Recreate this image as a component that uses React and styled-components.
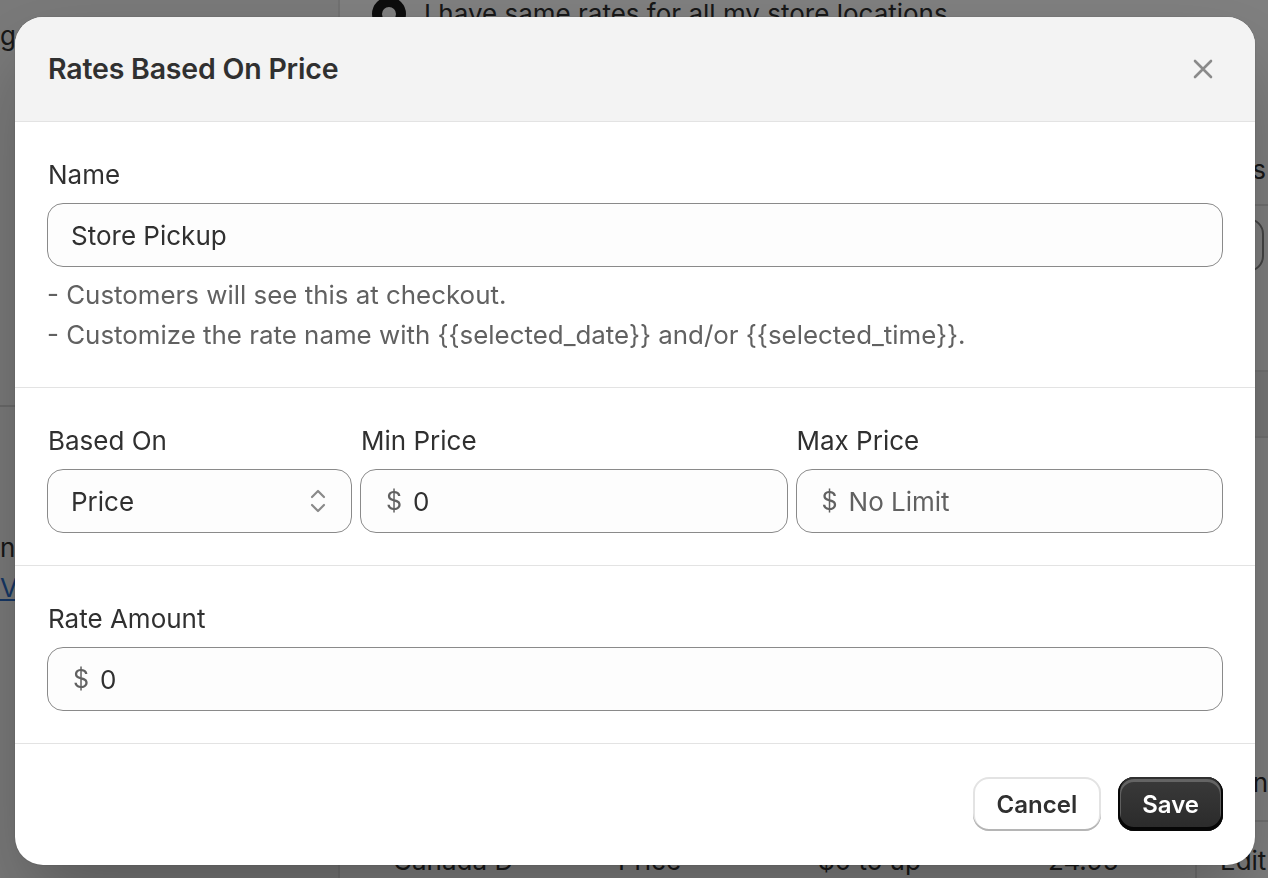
import React from "react";
import styled, { createGlobalStyle } from "styled-components";

const GlobalStyle = createGlobalStyle`
  * { box-sizing: border-box; }
  html, body { margin: 0; padding: 0; height: 100%; }
  body {
    font-family: Inter, "Noto Sans", "Liberation Sans", sans-serif;
    color: #303030;
    background: #ffffff;
    overflow: hidden;
  }
`;

/* ---------- background page ---------- */
const Page = styled.div`
  display: grid;
  grid-template-columns: 340px 1fr;
  height: 100vh;
  overflow: hidden;
  background: #ffffff;
`;

const Sidebar = styled.aside`
  background: #f3f3f3;
  border-right: 2px solid #e3e3e3;
  display: flex;
  flex-direction: column;
  font-size: 26px;
`;

const SideText = styled.div`
  padding: ${(p) => p.$pad || "18px 0 0 0"};
  line-height: 36px;
  color: #303030;
  white-space: nowrap;
`;

const SideRule = styled.div`
  height: 2px;
  background: #d4d4d4;
  margin-top: ${(p) => p.$top || "0"};
`;

const SideLink = styled.a`
  color: #2c6ecb;
  text-decoration: underline;
  padding-top: 4px;
  line-height: 36px;
  white-space: nowrap;
`;

const Main = styled.main`
  display: flex;
  flex-direction: column;
  font-size: 26px;
  min-width: 0;
`;

const RadioRow = styled.div`
  display: flex;
  align-items: center;
  gap: 18px;
  padding: 0 0 0 32px;
  margin-top: -6px;
  line-height: 40px;
  white-space: nowrap;
`;

const Radio = styled.span`
  width: 34px;
  height: 34px;
  border-radius: 50%;
  border: 10px solid #1a1a1a;
  background: #fff;
  flex: none;
`;

const RightHead = styled.div`
  display: flex;
  justify-content: flex-end;
  margin-top: 118px;
  padding: 0 2px 16px 0;
  border-bottom: 2px solid #e3e3e3;
  line-height: 36px;
  white-space: nowrap;
`;

const RightInput = styled.div`
  align-self: flex-end;
  width: 300px;
  height: 54px;
  margin: 12px 4px 0 0;
  border: 2px solid #8a8a8a;
  border-radius: 16px;
  background: #fdfdfd;
`;

const Band = styled.div`
  margin-top: 98px;
  height: 68px;
  background: #f0f0f0;
  border-top: 2px solid #e3e3e3;
  border-bottom: 2px solid #e3e3e3;
`;

const TableRow = styled.div`
  display: grid;
  grid-template-columns: 225px 200px 230px 147px minmax(0, 1fr);
  padding-left: 53px;
  height: 78px;
  align-items: center;
  border-bottom: 2px solid #e3e3e3;
  margin-top: ${(p) => p.$top || "0"};
  white-space: nowrap;
`;

const Cell = styled.span`
  ${(p) =>
    p.$action &&
    `border-left: 2px solid #e3e3e3; height: 100%; display: flex; align-items: center;
     justify-content: ${p.$end ? "flex-end" : "flex-start"};
     padding-left: 23px; padding-right: 0; min-width: 0;`}
`;

/* ---------- modal ---------- */
const Overlay = styled.div`
  position: fixed;
  inset: 0;
  background: rgba(0, 0, 0, 0.5);
  display: flex;
  align-items: center;
  justify-content: center;
  padding: 4px 13px 0 15px;
`;

const Dialog = styled.div`
  width: 100%;
  background: #ffffff;
  border-radius: 28px;
  overflow: hidden;
  box-shadow: 0 40px 80px -8px rgba(0, 0, 0, 0.28), 0 0 2px rgba(0, 0, 0, 0.2);
  display: flex;
  flex-direction: column;
`;

const Header = styled.header`
  display: flex;
  align-items: center;
  justify-content: space-between;
  background: #f3f3f3;
  padding: 32px 32px 32px 33px;
  border-bottom: 1px solid #e3e3e3;
`;

const Title = styled.h2`
  margin: 0;
  font-size: 28.5px;
  font-weight: 600;
  line-height: 40px;
  color: #303030;
  letter-spacing: -0.2px;
`;

const CloseButton = styled.button`
  width: 40px;
  height: 40px;
  border: none;
  background: transparent;
  padding: 0;
  display: flex;
  align-items: center;
  justify-content: center;
  cursor: pointer;
`;

const Section = styled.section`
  padding: 33px 32px 32px 32px;
  border-bottom: 1px solid #e3e3e3;
`;

const Field = styled.div`
  display: flex;
  flex-direction: column;
  min-width: 0;
`;

const Label = styled.label`
  font-size: 26px;
  line-height: 40px;
  margin-bottom: 8px;
  padding-left: 1px;
  color: #303030;
`;

const InputBox = styled.div`
  height: 64px;
  border: 1px solid #8a8a8a;
  border-radius: 16px;
  background: #fdfdfd;
  display: flex;
  align-items: center;
  gap: 11px;
  padding: 0 24px 0 ${(p) => p.$padLeft || "23px"};
  font-size: 26px;
`;

const Prefix = styled.span`
  color: #616161;
  font-size: 25px;
`;

const Value = styled.span`
  color: ${(p) => (p.$placeholder ? "#616161" : "#303030")};
  flex: 1;
  white-space: nowrap;
`;

const Help = styled.div`
  margin-top: 8px;
  font-size: 25.9px;
  line-height: 40px;
  color: #616161;
`;

const PriceGrid = styled.div`
  display: grid;
  grid-template-columns: 305px 1fr 1fr;
  gap: 8px;
`;

const Footer = styled.footer`
  display: flex;
  justify-content: flex-end;
  gap: 17px;
  padding: 33px 32px 34px 32px;
`;

const Button = styled.button`
  height: 54px;
  padding: 0 24px;
  border-radius: 16px;
  font-family: inherit;
  font-size: 24px;
  font-weight: 600;
  cursor: pointer;
  border: none;
  ${(p) =>
    p.$primary
      ? `
    background: linear-gradient(#3a3a3a, #2a2a2a);
    color: #ffffff;
    box-shadow: inset 0 -2px 0 2px rgba(0,0,0,0.85), inset 0 0 0 2px #303030, inset 0 2px 0 3px rgba(255,255,255,0.22);
  `
      : `
    background: #ffffff;
    color: #303030;
    box-shadow: inset 0 -2px 0 0 #b5b5b5, inset 0 0 0 2px #e3e3e3;
  `}
`;

const CloseIcon = () => (
  <svg width="20" height="20" viewBox="0 0 20 20" aria-hidden="true">
    <path d="M2 2 L18 18 M18 2 L2 18" stroke="#8a8a8a" strokeWidth="2.6" strokeLinecap="round" />
  </svg>
);

const SelectIcon = () => (
  <svg width="18" height="28" viewBox="0 0 18 28" aria-hidden="true">
    <path
      d="M3 10 L9 4 L15 10 M3 18 L9 24 L15 18"
      stroke="#8a8a8a"
      strokeWidth="2.2"
      fill="none"
      strokeLinecap="round"
      strokeLinejoin="round"
    />
  </svg>
);

export default function App() {
  return (
    <>
      <GlobalStyle />
      <Page>
        <Sidebar>
          <SideText>general settings</SideText>
          <SideRule $top="351px" />
          <SideText $pad="123px 0 0 0">notifications</SideText>
          <SideLink href="#">View details</SideLink>
        </Sidebar>
        <Main>
          <RadioRow>
            <Radio />
            <span>I have same rates for all my store locations</span>
          </RadioRow>
          <RightHead>Pickup rates</RightHead>
          <RightInput />
          <Band />
          <TableRow $top="306px">
            <Cell>Name</Cell>
            <Cell>Based on</Cell>
            <Cell>Range</Cell>
            <Cell>Rate</Cell>
            <Cell $action $end>Action</Cell>
          </TableRow>
          <TableRow>
            <Cell>Canada D</Cell>
            <Cell>Price</Cell>
            <Cell>$0 to up</Cell>
            <Cell>24.95</Cell>
            <Cell $action>Edit</Cell>
          </TableRow>
        </Main>
      </Page>

      <Overlay>
        <Dialog role="dialog" aria-label="Rates Based On Price">
          <Header>
            <Title>Rates Based On Price</Title>
            <CloseButton aria-label="Close">
              <CloseIcon />
            </CloseButton>
          </Header>

          <Section>
            <Field>
              <Label>Name</Label>
              <InputBox>
                <Value>Store Pickup</Value>
              </InputBox>
            </Field>
            <Help>
              <div>- Customers will see this at checkout.</div>
              <div>
                - Customize the rate name with {"{{selected_date}}"} and/or {"{{selected_time}}"}.
              </div>
            </Help>
          </Section>

          <Section>
            <PriceGrid>
              <Field>
                <Label>Based On</Label>
                <InputBox>
                  <Value>Price</Value>
                  <SelectIcon />
                </InputBox>
              </Field>
              <Field>
                <Label>Min Price</Label>
                <InputBox $padLeft="25px">
                  <Prefix>$</Prefix>
                  <Value>0</Value>
                </InputBox>
              </Field>
              <Field>
                <Label>Max Price</Label>
                <InputBox $padLeft="25px">
                  <Prefix>$</Prefix>
                  <Value $placeholder>No Limit</Value>
                </InputBox>
              </Field>
            </PriceGrid>
          </Section>

          <Section>
            <Field>
              <Label>Rate Amount</Label>
              <InputBox $padLeft="25px">
                <Prefix>$</Prefix>
                <Value>0</Value>
              </InputBox>
            </Field>
          </Section>

          <Footer>
            <Button>Cancel</Button>
            <Button $primary>Save</Button>
          </Footer>
        </Dialog>
      </Overlay>
    </>
  );
}
